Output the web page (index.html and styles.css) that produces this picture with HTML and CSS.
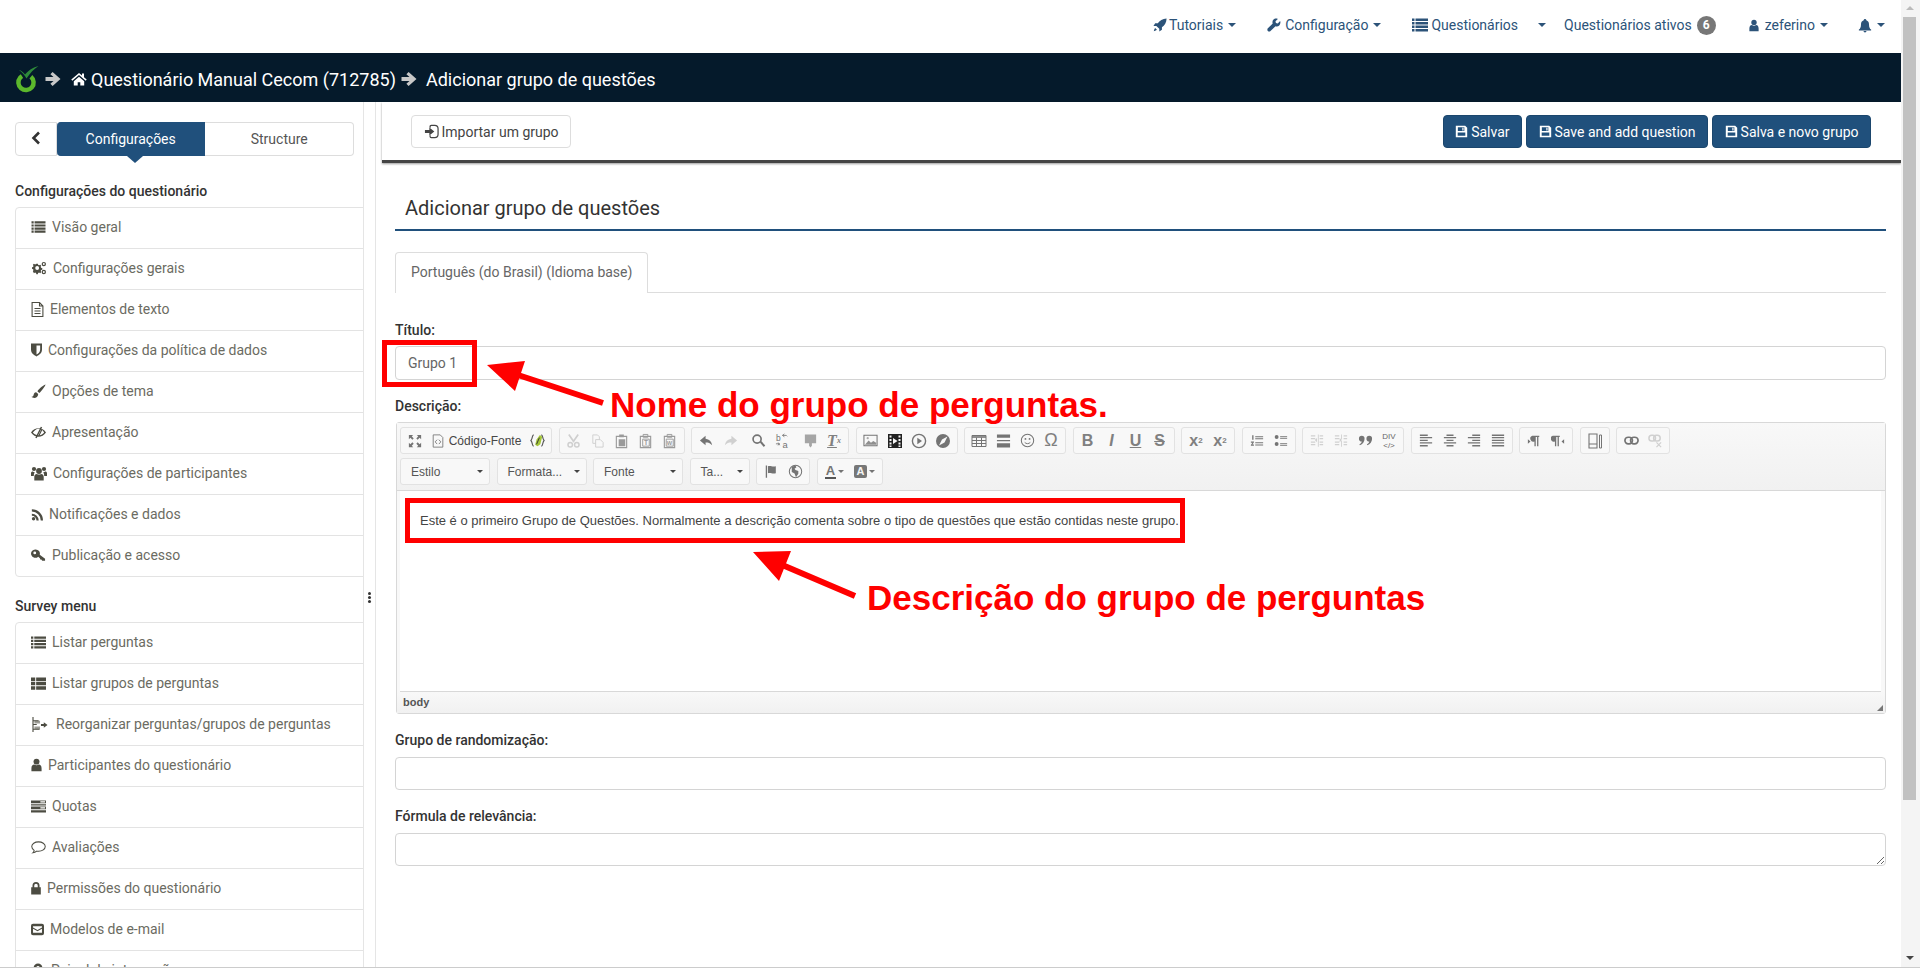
FILE: index.html
```html
<!DOCTYPE html>
<html lang="pt-BR">
<head>
	<title>Adicionar grupo de questões</title>
	<meta charset="utf-8">
	<link rel="stylesheet" href="styles.css">
</head>
<body>
<svg class="sprite" xmlns="http://www.w3.org/2000/svg">
	<symbol id="i-rocket" viewBox="0 0 16 16"><path d="M15.500.5C11 .5 7.500 3 5.500 6H2.500L.5 9h3.300l3.400 3.400V15.500l3-2v-3c3-2 5.300-5.500 5.300-10zM2.500 11.500c-1 1-1.500 3-1.500 3.500.5 0 2.500-.5 3.500-1.500z"/></symbol>
	<symbol id="i-wrench" viewBox="0 0 16 16"><path d="M15 3.500L12.300 6.200 10.200 5.700 9.700 3.600 12.400 1C10.500.2 8.400.7 7.200 2c-1 1.200-1.200 2.800-.7 4.200L1 11.800c-.8.800-.8 2.200 0 3s2.200.8 3 0L9.700 9.400c1.500.5 3.200.2 4.300-.9 1.300-1.300 1.700-3.300 1-5z"/></symbol>
	<symbol id="i-list" viewBox="0 0 16 16"><path d="M0 1.500h2.500v2.500H0zM3.500 1.500H16v2.500H3.500zM0 5h2.500v2.500H0zM3.500 5H16v2.500H3.500zM0 8.500h2.500V11H0zM3.500 8.500H16V11H3.500zM0 12h2.500v2.500H0zM3.500 12H16v2.500H3.500z"/></symbol>
	<symbol id="i-thlist" viewBox="0 0 16 16"><path d="M0 1.500h4.500v3.700H0zM5.500 1.500H16v3.700H5.500zM0 6.200h4.500v3.700H0zM5.500 6.200H16v3.700H5.500zM0 10.900h4.500v3.700H0zM5.500 10.900H16v3.700H5.500z"/></symbol>
	<symbol id="i-user" viewBox="1.500 0 13 16"><circle cx="8" cy="4" r="3.500"/><path d="M2 15.500v-3.700C2 9 3.500 7.500 5.300 7.500c1.600 1.200 3.800 1.200 5.400 0C12.500 7.500 14 9 14 11.800v3.700z"/></symbol>
	<symbol id="i-bell" viewBox="0 0 16 16"><path d="M8 .5A1.500 1.500 0 0 0 6.500 2C4.400 2.700 3.400 4.500 3.400 7c0 3-1 4.500-2.400 5.700v1h14v-1C13.600 11.500 12.600 10 12.600 7c0-2.500-1-4.300-3.100-5A1.500 1.500 0 0 0 8 .5zM6.300 14.400a1.700 1.700 0 0 0 3.400 0z"/></symbol>
	<symbol id="i-arrow" viewBox="0 0 16 16"><path d="M.5 6h8L5.400 3.200 7.600 1 15.500 8l-7.900 7-2.200-2.200L8.500 10h-8z"/></symbol>
	<symbol id="i-home" viewBox="0 0 16 16"><path d="M8 2L.3 8.600l1 1.100L8 4l6.700 5.700 1-1.100L13 6.300V2.500h-2v2.100zM2.800 10.200v4.300h3.900v-3.300h2.600v3.300h3.900v-4.300L8 5.700z"/></symbol>
	<symbol id="i-signin" viewBox="0 0 16 16"><path d="M6.500 4V2.800c0-.7.500-1.300 1.300-1.300h3.700c2 0 3.500 1.500 3.500 3.500v6c0 2-1.500 3.500-3.500 3.500H7.800c-.8 0-1.300-.6-1.300-1.300V12" fill="none" stroke="currentColor" stroke-width="1.300"/><path d="M1 6.500h4.700V3.800L11 8l-5.300 4.200V9.500H1z"/></symbol>
	<symbol id="i-save" viewBox="0 0 16 16"><path fill-rule="evenodd" d="M1 1h11.500L15 3.500V15H1zM3.500 2.700v4.600h8V2.700zM9 3.300h1.500v3.400H9zM3.300 9.200v4.100h9.400V9.200z"/></symbol>
	<symbol id="i-cogs" viewBox="0 0 16 16"><path fill-rule="evenodd" d="M6.700 3l.3 1.400 1.100.5 1.300-.7 1.200 1.200-.7 1.300.5 1.100 1.400.4v1.700l-1.400.4-.5 1.100.7 1.300-1.200 1.200-1.300-.7-1.100.5-.4 1.300H5l-.4-1.300-1.100-.5-1.300.7L1 11.700l.7-1.300-.5-1.100L0 8.900V7.200l1.200-.4.5-1.100-.7-1.300 1.200-1.200 1.300.7 1.100-.5L4.900 3zM5.900 5.800a2.200 2.200 0 1 0 0 4.400 2.200 2.200 0 0 0 0-4.400z"/><circle cx="13.500" cy="3.500" r="1.800" fill="none" stroke="currentColor" stroke-width="1.400"/><circle cx="13.500" cy="12.500" r="1.800" fill="none" stroke="currentColor" stroke-width="1.400"/></symbol>
	<symbol id="i-file" viewBox="2 .5 12 15"><path d="M2.600 1h7.400l3.400 3.500V15H2.600zM10 1v3.500h3.400M5 7h6M5 9.500h6M5 12h6" fill="none" stroke="currentColor" stroke-width="1.100"/></symbol>
	<symbol id="i-shield" viewBox="2 1 12 15"><path fill-rule="evenodd" d="M2 1.500h12v6.500c0 4-3 6-6 7.500-3-1.500-6-3.500-6-7.500zM8 3.500v10c2-1 4-2.600 4-5.500V3.500z"/></symbol>
	<symbol id="i-brush" viewBox="0 0 16 16"><path d="M15.500.5c-1.500.3-6.500 4-8.700 7.200l2 2C11.500 7.500 15.200 2 15.500.5zM5.500 8.800C3.500 9 3 10.500 2.700 12c-.2 1-1 1.500-2.200 1.700 1.500 1.800 7 2 7.200-3z"/></symbol>
	<symbol id="i-eye" viewBox="0 0 16 16"><path fill-rule="evenodd" d="M0 8c2-3 5-4.500 8-4.500S14 5 16 8c-2 3-5 4.500-8 4.500S2 11 0 8zM2 8c1.500 1.900 3.700 3 6 3l3-6.500C10 4.200 9 4 8 4 5.700 4 3.500 6.100 2 8zM12 5.300L9.300 11c1.900-.3 3.500-1.400 4.700-3-.5-1-1.200-2-2-2.700z"/><path d="M10.500 1.800l1.400.7L6 14.200l-1.400-.7z"/></symbol>
	<symbol id="i-users" viewBox="0 0 16 15"><circle cx="8" cy="5" r="2.900"/><circle cx="3" cy="3" r="2.100"/><circle cx="13" cy="3" r="2.100"/><path d="M3.300 14.500v-3.600c0-2 1-3 2.600-3 1.300.8 2.900.8 4.200 0 1.600 0 2.600 1 2.600 3v3.600zM0 10V7.300C0 6 .7 5.500 1.800 5.500c.6.500 1.300.7 2 .6-.4.800-1 2-1 3.900zM16 10V7.300c0-1.300-.7-1.800-1.800-1.800-.6.500-1.300.7-2 .6.400.8 1 2 1 3.900z"/></symbol>
	<symbol id="i-rss" viewBox="0 1 14 14"><circle cx="3" cy="13" r="2"/><path d="M1 7v2.600A5.400 5.400 0 0 1 6.400 15H9a8 8 0 0 0-8-8zM1 2v2.600A10.400 10.400 0 0 1 11.400 15H14A13 13 0 0 0 1 2z"/></symbol>
	<symbol id="i-key" viewBox="0 0 16 16"><path fill-rule="evenodd" d="M5 1.500a4.500 4.500 0 0 1 4.300 5.800l5.700 4.200v2h-3l-1-1.300-1.200.1-.3-1.300-1.800-1.800A4.500 4.500 0 1 1 5 1.500zM4 3.700a1.500 1.500 0 1 0 0 3 1.500 1.500 0 0 0 0-3z"/></symbol>
	<symbol id="i-tree" viewBox="0 0 19 16"><path d="M1.500 0v16M1.500 4h6M1.500 8h4M1.500 13h7" fill="none" stroke="currentColor" stroke-width="1.200"/><path d="M3 4h6v3H3zM3 10h6v3H3z" opacity=".55"/><path d="M10 7.500h3V5.500l4 3-4 3v-2h-3z"/></symbol>
	<symbol id="i-quota" viewBox="0 0 16 16"><path d="M0 1.500h16v3H0zM0 5.500h16v1.500H0zM0 8h16v3H0zM0 12h16v2.500H0z"/><path d="M10 2.400h5v1.200h-5zM10 8.900h5v1.200h-5z" fill="#fff"/></symbol>
	<symbol id="i-comment" viewBox="0 0 16 16"><path d="M8 2C4 2 .8 4.200.8 7c0 1.600 1 3 2.600 4-.1 1-.6 2-1.400 2.700 1.600-.2 3-.9 4-1.800.7.100 1.300.1 2 .1 4 0 7.200-2.200 7.200-5S12 2 8 2z" fill="none" stroke="currentColor" stroke-width="1.100"/></symbol>
	<symbol id="i-lock" viewBox="2.500 0 11 16"><path fill-rule="evenodd" d="M4 7V5a4 4 0 0 1 8 0v2h1.500v8.500h-11V7zM6 7h4V5a2 2 0 0 0-4 0z"/></symbol>
	<symbol id="i-mail" viewBox="0 0 16 16"><path fill-rule="evenodd" d="M2.500 1h11A2.500 2.500 0 0 1 16 3.500v9a2.500 2.500 0 0 1-2.500 2.500h-11A2.500 2.500 0 0 1 0 12.500v-9A2.500 2.500 0 0 1 2.500 1zM2.500 4v1.500L8 8.500l5.500-3V4zM2.500 7v5h11V7L8 10z"/></symbol>
	<symbol id="i-pin" viewBox="0 0 16 16"><path fill-rule="evenodd" d="M8 .5a5 5 0 0 1 5 5c0 2.500-3 6-5 9.500C6 11.500 3 8 3 5.500a5 5 0 0 1 5-5zM8 3.500a2 2 0 1 0 0 4 2 2 0 0 0 0-4z"/></symbol>

	<symbol id="c-max" viewBox="0 0 16 16"><path d="M1 1h5L4.300 2.700 6.500 5 5 6.500 2.700 4.300 1 6zM15 1v5l-1.700-1.700L11 6.500 9.500 5l2.200-2.300L10 1zM1 15v-5l1.700 1.700L5 9.500 6.500 11l-2.200 2.300L6 15zM15 15h-5l1.700-1.700L9.500 11 11 9.500l2.300 2.200L15 10z"/></symbol>
	<symbol id="c-src" viewBox="0 0 16 16"><path d="M2.500 1h8l3 3v11h-11z" fill="none" stroke="currentColor"/><path d="M7 6.500L4.800 9 7 11.500M9 6.500L11.200 9 9 11.500" fill="none" stroke="currentColor"/></symbol>
	<symbol id="c-ajax" viewBox="0 0 16 16"><path d="M4 2C2 2 3 6 1 8c2 2 1 6 3 6M12 2c2 0 1 4 3 6-2 2-1 6-3 6" fill="none" stroke="#555" stroke-width="1.200"/><path d="M10.500 2L13 4l-2 8-3 2-2.500-1.500L7 7z" fill="#a4c639"/><path d="M7 12l3-7" stroke="#333" fill="none"/></symbol>
	<symbol id="c-cut" viewBox="0 0 16 16"><path d="M3 1l5.500 8M13 1L7.500 9" fill="none" stroke="currentColor" stroke-width="1.800"/><circle cx="4.500" cy="12" r="2.400" fill="none" stroke="currentColor" stroke-width="1.600"/><circle cx="11.500" cy="12" r="2.400" fill="none" stroke="currentColor" stroke-width="1.600"/></symbol>
	<symbol id="c-copy" viewBox="0 0 16 16"><path d="M3 1.500h5l2 2v3M3 1.500v9h3M6 6.500h5l3 3v5H6z" fill="none" stroke="currentColor"/></symbol>
	<symbol id="c-paste" viewBox="0 0 16 16"><path d="M2.500 3h11v12h-11z" fill="none" stroke="currentColor" stroke-width="1.200"/><path d="M5.500 1h5v3h-5zM5 6h7v7.500H5z"/></symbol>
	<symbol id="c-paste-t" viewBox="0 0 16 16"><path d="M2.500 3h11v12h-11z" fill="none" stroke="currentColor" stroke-width="1.200"/><path d="M5.500 1h5v3h-5zM5 6h7v7.500H5z" fill="none" stroke="currentColor"/><text x="6.300" y="12.500" font-size="7" font-weight="700" font-family="Liberation Sans">T</text></symbol>
	<symbol id="c-paste-w" viewBox="0 0 16 16"><path d="M2.500 3h11v12h-11z" fill="none" stroke="currentColor" stroke-width="1.200"/><path d="M5.500 1h5v3h-5zM4.500 6h7.500v7.500H4.500z" fill="none" stroke="currentColor"/><text x="5" y="12" font-size="6" font-weight="700" font-family="Liberation Sans">W</text></symbol>
	<symbol id="c-undo" viewBox="0 0 16 16"><path d="M7 3L1 8l6 5v-3c3 0 5 .5 7 3-.5-4-3-6.500-7-7z"/></symbol>
	<symbol id="c-redo" viewBox="0 0 16 16"><path d="M9 3l6 5-6 5v-3c-3 0-5 .5-7 3 .5-4 3-6.500 7-7z"/></symbol>
	<symbol id="c-find" viewBox="0 0 16 16"><circle cx="6.500" cy="6.500" r="4.300" fill="none" stroke="currentColor" stroke-width="1.800"/><path d="M9.500 10l1.400-1.400 4.300 4.700-1.600 1.500z"/></symbol>
	<symbol id="c-replace" viewBox="0 0 16 16"><text x="1" y="8" font-size="9" font-family="Liberation Sans">b</text><text x="8" y="15.500" font-size="10" font-family="Liberation Sans">a</text><path d="M8 2h4l1 1M10 .5L8 2l2 1.500M1 11h3l1 1.500M3 10l2 1-2 1.500" fill="none" stroke="currentColor" stroke-width=".9"/></symbol>
	<symbol id="c-marker" viewBox="0 0 16 16"><path d="M2 1h12v9.500H9.500V13L8 15l-1.500-2v-2.500H2z" opacity=".75"/></symbol>
	<symbol id="c-image" viewBox="0 0 16 16"><path d="M1 2.500h14v11H1z" fill="none" stroke="currentColor" stroke-width="1.100"/><path d="M2 12.500l4-4.500 2.500 2.500 2.500-2 3 2v2z" opacity=".8"/><circle cx="5" cy="5.500" r="1.200" opacity=".6"/></symbol>
	<symbol id="c-film" viewBox="0 0 16 16"><path fill-rule="evenodd" d="M1 1h14v14H1zM2.500 2.500v2h2v-2zM2.500 6v2h2V6zM2.500 9.500v2h2v-2zM2.500 12.500v1.500h2v-1.500zM11.500 2.500v2h2v-2zM11.500 6v2h2V6zM11.500 9.500v2h2v-2zM11.500 12.500v1.500h2v-1.500zM6 5v6l4.500-3z"/></symbol>
	<symbol id="c-play" viewBox="0 0 16 16"><circle cx="8" cy="8" r="6.600" fill="none" stroke="currentColor" stroke-width="1.400"/><path d="M6.300 4.800v6.400L11 8z"/></symbol>
	<symbol id="c-compass" viewBox="0 0 16 16"><path fill-rule="evenodd" d="M8 1a7 7 0 1 1 0 14A7 7 0 0 1 8 1zM12.500 3.500L7 6.500 4 12.500 9.500 9.500z"/></symbol>
	<symbol id="c-table" viewBox="0 0 16 16"><path d="M1 2h14v3H1z" opacity=".8"/><path d="M1 2.500h14v11H1zM1 7.500h14M1 10.500h14M5.500 4.500v9M10.500 4.500v9" fill="none" stroke="currentColor"/></symbol>
	<symbol id="c-hr" viewBox="0 0 16 16"><path d="M1 1h14v3.500H1zM1 7h14v1.200H1zM1 10.500h14v4.500H1z"/></symbol>
	<symbol id="c-smile" viewBox="0 0 16 16"><circle cx="8" cy="8" r="6.600" fill="none" stroke="currentColor" stroke-width="1.100"/><circle cx="5.800" cy="6.300" r="1"/><circle cx="10.200" cy="6.300" r="1"/><path d="M5 10c1.500 1.800 4.500 1.800 6 0" fill="none" stroke="currentColor"/></symbol>
	<symbol id="c-ol" viewBox="0 0 16 16"><path d="M6 3h9v1.200H6zM6 5.500h9v1.200H6zM6 10h9v1.200H6zM6 12.500h9v1.200H6zM2.500 2H4v5H2.500zM1 9h3.500v1L2.800 12.500h1.700V14H1v-1l1.800-2.500H1z"/></symbol>
	<symbol id="c-ul" viewBox="0 0 16 16"><circle cx="3" cy="4" r="2.200"/><circle cx="3" cy="12" r="2.200"/><path d="M7 3h8v1.200H7zM7 5h8v1H7zM7 11h8v1.200H7zM7 13h8v1H7z"/></symbol>
	<symbol id="c-outdent" viewBox="0 0 16 16"><path d="M1 2h5v1.500H1zM1 5h5v1.500H1zM1 9h5v1.500H1zM1 12h5v1.500H1zM9 1h1v14H9zM11 2h4v1.500h-4zM11 5h4v1.500h-4zM11 9h4v1.500h-4zM11 12h4v1.500h-4zM8 5v5L5.500 7.500z"/></symbol>
	<symbol id="c-indent" viewBox="0 0 16 16"><path d="M1 2h5v1.500H1zM1 5h5v1.500H1zM1 9h5v1.500H1zM1 12h5v1.500H1zM8 1h1v14H8zM11 2h4v1.500h-4zM11 5h4v1.500h-4zM11 9h4v1.500h-4zM11 12h4v1.500h-4zM6.500 5v5L9 7.500z"/></symbol>
	<symbol id="c-quote" viewBox="0 0 16 16"><path d="M4 3a3 3 0 0 1 3 3c0 3-2 6-5 7l-.5-1c1.500-.7 2.500-2 2.500-3a3 3 0 0 1 0-6zM12 3a3 3 0 0 1 3 3c0 3-2 6-5 7l-.5-1c1.500-.7 2.500-2 2.500-3a3 3 0 0 1 0-6z"/></symbol>
	<symbol id="c-left" viewBox="0 0 16 16"><path d="M1 1h9v1.800H1zM1 4h14v1.500H1zM1 7h9v1.500H1zM1 10h14v1.500H1zM1 13h9v1.800H1z"/></symbol>
	<symbol id="c-center" viewBox="0 0 16 16"><path d="M4 1h8v1.800H4zM1 4h14v1.500H1zM4 7h8v1.500H4zM1 10h14v1.500H1zM4 13h8v1.800H4z"/></symbol>
	<symbol id="c-right" viewBox="0 0 16 16"><path d="M6 1h9v1.800H6zM1 4h14v1.500H1zM6 7h9v1.500H6zM1 10h14v1.500H1zM6 13h9v1.800H6z"/></symbol>
	<symbol id="c-justify" viewBox="0 0 16 16"><path d="M1 1h14v1.800H1zM1 4h14v1.500H1zM1 7h14v1.500H1zM1 10h14v1.500H1zM1 13h14v1.800H1z"/></symbol>
	<symbol id="c-ltr" viewBox="0 0 16 16"><path d="M6 2h8v1.500h-1V14h-1.500V3.500H10V14H8.500V8.500A3.300 3.300 0 0 1 6 2zM1 6v5l3-2.500z"/></symbol>
	<symbol id="c-rtl" viewBox="0 0 16 16"><path d="M2 2h8v1.500H9V14H7.500V3.500H6V14H4.500V8.500A3.300 3.300 0 0 1 2 2zM15 6v5l-3-2.500z"/></symbol>
	<symbol id="c-blocks" viewBox="0 0 16 16"><path d="M2 1h8v14H2zM2 11h8" fill="none" stroke="currentColor" stroke-width="1.100"/><path d="M12.500 2h2v13h-2z" fill="none" stroke="currentColor"/></symbol>
	<symbol id="c-link" viewBox="0 0 16 16"><rect x="1" y="4.500" width="8" height="7" rx="3.500" fill="none" stroke="currentColor" stroke-width="1.800"/><rect x="7" y="4.500" width="8" height="7" rx="3.500" fill="none" stroke="currentColor" stroke-width="1.800"/></symbol>
	<symbol id="c-unlink" viewBox="0 0 16 16"><rect x="1" y="2.500" width="7" height="6" rx="3" fill="none" stroke="currentColor" stroke-width="1.600"/><rect x="6" y="2.500" width="7" height="6" rx="3" fill="none" stroke="currentColor" stroke-width="1.600"/><path d="M9 10l5 5M14 10l-5 5" stroke="currentColor" fill="none" stroke-width="1.300"/></symbol>
	<symbol id="c-flag" viewBox="0 0 16 16"><path d="M2 1h1.500v14H2zM4.500 2c3-1 5 1 9 0v8c-4 1-6-1-9 0z"/></symbol>
	<symbol id="c-globe" viewBox="0 0 16 16"><circle cx="8" cy="8" r="6.600" fill="none" stroke="currentColor" stroke-width="1.100"/><path d="M4 3l4-1.500 1 2-2 1.500 1 1.500 3 1v3L8.500 14 7 10 4 8.500z"/></symbol>
</svg>

<div class="page">
	<div class="window">
		<nav class="topnav">
			<a class="nav-item"><svg class="nav-icon" width="14" height="14"><use href="#i-rocket"/></svg>Tutoriais<i class="caret"></i></a>
			<a class="nav-item nav-config"><svg class="nav-icon" width="14" height="14"><use href="#i-wrench"/></svg>Configuração<i class="caret"></i></a>
			<a class="nav-item nav-surveys"><svg class="nav-icon" width="16" height="16"><use href="#i-list"/></svg>Questionários<i class="caret"></i></a>
			<a class="nav-item nav-active">Questionários ativos<span class="badge">6</span></a>
			<a class="nav-item nav-user"><svg class="nav-icon" width="10" height="13"><use href="#i-user"/></svg>zeferino<i class="caret"></i></a>
			<a class="nav-item nav-bell"><svg class="nav-icon" width="14" height="15"><use href="#i-bell"/></svg><i class="caret"></i></a>
		</nav>

		<header class="breadcrumb">
			<svg class="logo" width="24" height="28" viewBox="0 0 24 28">
				<circle cx="11" cy="17.500" r="7.600" fill="none" stroke="#5cb82c" stroke-width="4.500" stroke-dasharray="38 9.800" transform="rotate(-50 11 17.500)"/>
				<path d="M4 5c2 .5 4 2 6 4.500C13 6 17 2.500 23.500 1c-4.500 3-8.500 7-12 12.500C9.500 10 7 7 4 5z" fill="#2e8b3a"/>
			</svg>
			<svg class="crumb-arrow" width="16" height="16"><use href="#i-arrow"/></svg>
			<svg class="crumb-home" width="16" height="16"><use href="#i-home"/></svg>
			<span class="crumb-survey">Questionário Manual Cecom (712785)</span>
			<svg class="crumb-arrow" width="16" height="16"><use href="#i-arrow"/></svg>
			<span class="crumb-page">Adicionar grupo de questões</span>
		</header>

		<div class="workspace">
			<aside class="sidebar">
				<div class="side-tabs">
					<button class="side-back"><svg width="12" height="14" viewBox="0 0 12 14"><path d="M9 1.500L3.500 7 9 12.500" fill="none" stroke="#333" stroke-width="2.600"/></svg></button>
					<button class="side-tab active">Configurações</button>
					<button class="side-tab">Structure</button>
				</div>

				<h4 class="side-title">Configurações do questionário</h4>
				<ul class="side-list">
					<li><svg width="15" height="14"><use href="#i-list"/></svg>Visão geral</li>
					<li><svg width="16" height="14"><use href="#i-cogs"/></svg>Configurações gerais</li>
					<li><svg width="13" height="15"><use href="#i-file"/></svg>Elementos de texto</li>
					<li><svg width="11" height="14"><use href="#i-shield"/></svg>Configurações da política de dados</li>
					<li><svg width="15" height="15"><use href="#i-brush"/></svg>Opções de tema</li>
					<li><svg width="15" height="15"><use href="#i-eye"/></svg>Apresentação</li>
					<li><svg width="16" height="15"><use href="#i-users"/></svg>Configurações de participantes</li>
					<li><svg width="12" height="13"><use href="#i-rss"/></svg>Notificações e dados</li>
					<li><svg width="15" height="15"><use href="#i-key"/></svg>Publicação e acesso</li>
				</ul>

				<h4 class="side-title">Survey menu</h4>
				<ul class="side-list">
					<li><svg width="15" height="15"><use href="#i-list"/></svg>Listar perguntas</li>
					<li><svg width="15" height="15"><use href="#i-thlist"/></svg>Listar grupos de perguntas</li>
					<li><svg width="19" height="15"><use href="#i-tree"/></svg>Reorganizar perguntas/grupos de perguntas</li>
					<li><svg width="11" height="14"><use href="#i-user"/></svg>Participantes do questionário</li>
					<li><svg width="15" height="15"><use href="#i-quota"/></svg>Quotas</li>
					<li><svg width="15" height="15"><use href="#i-comment"/></svg>Avaliações</li>
					<li><svg width="10" height="14"><use href="#i-lock"/></svg>Permissões do questionário</li>
					<li><svg width="13" height="13"><use href="#i-mail"/></svg>Modelos de e-mail</li>
					<li><svg width="14" height="14"><use href="#i-pin"/></svg>Painel de integração</li>
				</ul>
			</aside>

			<div class="gutter"><span class="gutter-dots"></span></div>

			<main class="main">
				<div class="toolbar">
					<button class="btn"><svg width="15" height="15"><use href="#i-signin"/></svg>Importar um grupo</button>
					<div class="toolbar-right">
						<button class="btn btn-primary"><svg width="13" height="13"><use href="#i-save"/></svg>Salvar</button>
						<button class="btn btn-primary"><svg width="13" height="13"><use href="#i-save"/></svg>Save and add question</button>
						<button class="btn btn-primary"><svg width="13" height="13"><use href="#i-save"/></svg>Salva e novo grupo</button>
					</div>
				</div>

				<section class="content">
					<h3 class="page-title">Adicionar grupo de questões</h3>

					<div class="lang-tabs">
						<span class="lang-tab">Português (do Brasil) (Idioma base)</span>
					</div>

					<label class="field-label label-title">Título:</label>
					<input class="field field-title" type="text" value="Grupo 1">

					<label class="field-label label-desc">Descrição:</label>
					<div class="editor">
						<div class="ck-top">
							<div class="ck-row">
								<div class="ck-group">
									<span class="ck-btn"><svg width="14" height="14"><use href="#c-max"/></svg></span>
									<span class="ck-btn ck-source"><svg width="14" height="14"><use href="#c-src"/></svg>Código-Fonte</span>
									<span class="ck-btn"><svg width="15" height="15"><use href="#c-ajax"/></svg></span>
								</div>
								<div class="ck-group off">
									<span class="ck-btn"><svg width="15" height="16"><use href="#c-cut"/></svg></span>
									<span class="ck-btn"><svg width="15" height="16"><use href="#c-copy"/></svg></span>
									<span class="ck-btn ck-paste"><svg width="15" height="16"><use href="#c-paste"/></svg></span>
									<span class="ck-btn ck-paste"><svg width="15" height="16"><use href="#c-paste-t"/></svg></span>
									<span class="ck-btn ck-paste"><svg width="15" height="16"><use href="#c-paste-w"/></svg></span>
								</div>
								<div class="ck-group">
									<span class="ck-btn"><svg width="15" height="15"><use href="#c-undo"/></svg></span>
									<span class="ck-btn off"><svg width="15" height="15"><use href="#c-redo"/></svg></span>
									<span class="ck-btn ck-sep"><svg width="15" height="15"><use href="#c-find"/></svg></span>
									<span class="ck-btn"><svg width="15" height="16"><use href="#c-replace"/></svg></span>
									<span class="ck-btn ck-sep ck-light"><svg width="15" height="16"><use href="#c-marker"/></svg></span>
									<span class="ck-btn ck-text ck-clear"><u>T</u><sub>x</sub></span>
								</div>
								<div class="ck-group">
									<span class="ck-btn"><svg width="15" height="15"><use href="#c-image"/></svg></span>
									<span class="ck-btn dark"><svg width="16" height="16"><use href="#c-film"/></svg></span>
									<span class="ck-btn"><svg width="16" height="16"><use href="#c-play"/></svg></span>
									<span class="ck-btn"><svg width="16" height="16"><use href="#c-compass"/></svg></span>
								</div>
								<div class="ck-group">
									<span class="ck-btn"><svg width="16" height="16"><use href="#c-table"/></svg></span>
									<span class="ck-btn"><svg width="15" height="16"><use href="#c-hr"/></svg></span>
									<span class="ck-btn"><svg width="15" height="15"><use href="#c-smile"/></svg></span>
									<span class="ck-btn ck-text ck-omega">Ω</span>
								</div>
								<div class="ck-group">
									<span class="ck-btn ck-text ck-b">B</span>
									<span class="ck-btn ck-text ck-i">I</span>
									<span class="ck-btn ck-text ck-u">U</span>
									<span class="ck-btn ck-text ck-s">S</span>
								</div>
								<div class="ck-group">
									<span class="ck-btn ck-text ck-b">x<sub>2</sub></span>
									<span class="ck-btn ck-text ck-b">x<sup>2</sup></span>
								</div>
								<div class="ck-group">
									<span class="ck-btn"><svg width="14" height="15"><use href="#c-ol"/></svg></span>
									<span class="ck-btn"><svg width="14" height="15"><use href="#c-ul"/></svg></span>
								</div>
								<div class="ck-group">
									<span class="ck-btn off"><svg width="14" height="15"><use href="#c-outdent"/></svg></span>
									<span class="ck-btn off"><svg width="14" height="15"><use href="#c-indent"/></svg></span>
									<span class="ck-btn"><svg width="15" height="15"><use href="#c-quote"/></svg></span>
									<span class="ck-btn ck-div">DIV<br>&lt;/&gt;</span>
								</div>
								<div class="ck-group">
									<span class="ck-btn"><svg width="14" height="15"><use href="#c-left"/></svg></span>
									<span class="ck-btn"><svg width="14" height="15"><use href="#c-center"/></svg></span>
									<span class="ck-btn"><svg width="14" height="15"><use href="#c-right"/></svg></span>
									<span class="ck-btn"><svg width="14" height="15"><use href="#c-justify"/></svg></span>
								</div>
								<div class="ck-group">
									<span class="ck-btn"><svg width="14" height="14"><use href="#c-ltr"/></svg></span>
									<span class="ck-btn"><svg width="14" height="14"><use href="#c-rtl"/></svg></span>
								</div>
								<div class="ck-group">
									<span class="ck-btn"><svg width="16" height="18"><use href="#c-blocks"/></svg></span>
								</div>
								<div class="ck-group">
									<span class="ck-btn"><svg width="15" height="15"><use href="#c-link"/></svg></span>
									<span class="ck-btn off"><svg width="15" height="15"><use href="#c-unlink"/></svg></span>
								</div>
							</div>
							<div class="ck-row">
								<span class="ck-combo">Estilo<i class="caret"></i></span>
								<span class="ck-combo">Formata...<i class="caret"></i></span>
								<span class="ck-combo">Fonte<i class="caret"></i></span>
								<span class="ck-combo ck-combo-small">Ta...<i class="caret"></i></span>
								<div class="ck-group">
									<span class="ck-btn"><svg width="14" height="15"><use href="#c-flag"/></svg></span>
									<span class="ck-btn"><svg width="15" height="15"><use href="#c-globe"/></svg></span>
								</div>
								<div class="ck-group">
									<span class="ck-btn ck-color"><span class="ck-a">A</span><i class="caret"></i></span>
									<span class="ck-btn ck-color"><span class="ck-a-bg">A</span><i class="caret"></i></span>
								</div>
							</div>
						</div>
						<div class="ck-body">Este é o primeiro Grupo de Questões. Normalmente a descrição comenta sobre o tipo de questões que estão contidas neste grupo.<span class="ck-cursor"></span></div>
						<div class="ck-bottom">body<i class="ck-resize"></i></div>
					</div>

					<label class="field-label label-random">Grupo de randomização:</label>
					<input class="field" type="text">

					<label class="field-label label-formula">Fórmula de relevância:</label>
					<textarea class="field field-area"></textarea>
				</section>
			</main>
		</div>
	</div>

	<div class="scrollbar">
		<i class="scroll-up"></i>
		<div class="scroll-thumb"></div>
		<i class="scroll-down"></i>
	</div>

	<!-- red notes drawn on top of the screen -->
	<div class="notes">
		<svg class="note-arrows" width="1920" height="968">
			<path d="M603 403L515 374M855 596L780 564" fill="none" stroke="#f00" stroke-width="6"/>
			<path d="M487 365L525 361L515 391zM753 552L791 551L779 581z" fill="#f00"/>
		</svg>
		<div class="note-box box-title"></div>
		<div class="note-box box-desc"></div>
		<div class="note-text text-title">Nome do grupo de perguntas.</div>
		<div class="note-text text-desc">Descrição do grupo de perguntas</div>
	</div>
</div>
</body>
</html>
```
FILE: styles.css
```css
html, body {
	margin: 0;
	padding: 0;
	height: 100%;
	overflow: hidden;
	background-color: #fff;
}

body {
	font-family: "Roboto", "Liberation Sans", sans-serif;
	font-size: 14px;
	color: #555;
}

.sprite {
	display: none;
}

.page {
	position: relative;
	display: flex;
	height: 967px;
	border-bottom: 1px solid #ccc;
	overflow: hidden;
}

.window {
	display: flex;
	flex-direction: column;
	width: 1901px;
	flex: none;
}

svg {
	fill: currentColor;
	flex: none;
}

.caret {
	display: inline-block;
	border-top: 4px solid currentColor;
	border-left: 4px solid transparent;
	border-right: 4px solid transparent;
	width: 0;
	height: 0;
}

/* top navigation */
.topnav {
	display: flex;
	align-items: center;
	justify-content: flex-end;
	height: 50px;
	padding: 0 16px 3px 0;
	color: #2c5379;
	flex: none;
}

.nav-item {
	display: flex;
	align-items: center;
	margin-left: 31px;
	white-space: nowrap;
}

.nav-icon {
	margin-right: 2px;
}

.nav-item .caret {
	margin-left: 5px;
}

.nav-config .nav-icon {
	margin-right: 4px;
}

.nav-surveys .nav-icon {
	margin-right: 3px;
}

.nav-surveys .caret {
	margin-left: 20px;
}

.nav-active {
	margin-left: 18px;
}

.nav-user {
	margin-left: 33px;
}

.nav-user .nav-icon {
	margin-right: 6px;
}

.nav-bell {
	margin-left: 30px;
}

.nav-bell .nav-icon {
	margin-right: 0;
}

.badge {
	display: inline-block;
	width: 19px;
	height: 19px;
	line-height: 19px;
	margin-left: 5px;
	border-radius: 50%;
	background-color: #777;
	color: #fff;
	font-size: 12px;
	font-weight: 700;
	text-align: center;
}

/* dark title bar */
.breadcrumb {
	display: flex;
	align-items: center;
	height: 46px;
	padding: 3px 0 0 15px;
	background-color: #051a2b;
	color: #fff;
	font-size: 18px;
	flex: none;
}

.breadcrumb svg {
	color: #c8c8c8;
}

.logo {
	margin-right: 6px;
}

.crumb-arrow {
	margin-right: 9px;
}

.breadcrumb .crumb-home {
	color: #fff;
	margin-right: 4px;
	margin-left: 1px;
}

.crumb-survey {
	margin-right: 5px;
}

.workspace {
	display: flex;
	flex: 1;
	min-height: 0;
}

/* sidebar */
.sidebar {
	width: 363px;
	padding: 20px 0 0 15px;
	box-sizing: border-box;
	overflow: hidden;
	flex: none;
}

.side-tabs {
	position: relative;
	display: flex;
	width: 339px;
	height: 34px;
	margin-bottom: 27px;
}

.side-tabs button {
	font-family: inherit;
	font-size: 14px;
	color: #555;
	background-color: #fff;
	border: 1px solid #ddd;
	padding: 0;
}

.side-back {
	width: 42px;
	border-radius: 4px 0 0 4px;
}

.side-tab {
	width: 149px;
	border-left: none !important;
}

.side-tab:last-child {
	border-radius: 0 4px 4px 0;
}

.side-tabs .side-tab.active {
	background-color: #20507c;
	border-color: #20507c;
	color: #fff;
	border-radius: 4px 0 0 4px;
}

.side-tab.active::after {
	content: "";
	position: absolute;
	left: 112px;
	top: 34px;
	border-top: 7px solid #20507c;
	border-left: 8px solid transparent;
	border-right: 8px solid transparent;
}

.side-title {
	margin: 0 0 7px;
	height: 17px;
	line-height: 17px;
	font-size: 14px;
	font-weight: 500;
	color: #333;
}

.side-list {
	list-style: none;
	margin: 0 0 21px;
	padding: 0;
	width: 370px;
	border: 1px solid #e3e3e3;
	border-radius: 4px 0 0 4px;
}

.side-list li {
	display: flex;
	align-items: center;
	height: 38px;
	padding: 0 0 2px 15px;
	border-bottom: 1px solid #e3e3e3;
	color: #6b6b62;
	white-space: nowrap;
}

.side-list li:last-child {
	border-bottom: none;
}

.side-list svg {
	margin-right: 6px;
	color: #4c4c42;
}

.gutter {
	position: relative;
	width: 11px;
	border-left: 1px solid #e5e5e5;
	border-right: 1px solid #e5e5e5;
	flex: none;
}

.gutter-dots {
	position: absolute;
	left: 4px;
	top: 490px;
	width: 3px;
	height: 3px;
	border-radius: 50%;
	background-color: #333;
	box-shadow: 0 4px 0 #333, 0 8px 0 #333;
}

/* main column */
.main {
	flex: 1;
	min-width: 0;
}

.toolbar {
	display: flex;
	justify-content: space-between;
	align-items: flex-start;
	height: 45px;
	margin-left: 6px;
	padding: 13px 30px 0 29px;
	border-bottom: 3px solid #444;
	box-shadow: 0 1px 2px rgba(0,0,0,0.4);
}

.toolbar-right {
	display: flex;
	gap: 4px;
}

.btn {
	display: flex;
	align-items: center;
	gap: 3px;
	height: 33px;
	padding: 0 11.500px;
	font-family: inherit;
	font-size: 14px;
	color: #444;
	background-color: #fff;
	border: 1px solid #ddd;
	border-radius: 4px;
	white-space: nowrap;
}

.btn-primary {
	background-color: #20507c;
	border-color: #1b466d;
	color: #fff;
}

.content {
	padding: 0 15px 0 19px;
}

.page-title {
	margin: 0 0 21px;
	padding: 33px 0 8px 10px;
	height: 25px;
	line-height: 25px;
	font-size: 20px;
	font-weight: 400;
	color: #333;
	border-bottom: 2px solid #20507c;
}

.lang-tabs {
	height: 40px;
	border-bottom: 1px solid #ddd;
}

.lang-tab {
	display: inline-block;
	height: 41px;
	line-height: 38px;
	padding: 0 15px;
	box-sizing: border-box;
	background-color: #fff;
	border: 1px solid #ddd;
	border-bottom: none;
	border-radius: 4px 4px 0 0;
	color: #666;
}

.field-label {
	display: block;
	height: 16px;
	line-height: 16px;
	font-size: 14px;
	font-weight: 500;
	color: #333;
}

.label-title {
	margin-top: 29px;
	margin-bottom: 8px;
}

.label-desc {
	margin-top: 18px;
	margin-bottom: 8px;
}

.label-random {
	margin-top: 18px;
	margin-bottom: 9px;
}

.label-formula {
	margin-top: 18px;
	margin-bottom: 9px;
}

.field {
	display: block;
	width: 100%;
	height: 33px;
	box-sizing: border-box;
	padding: 0 12px;
	font-family: inherit;
	font-size: 14px;
	color: #666;
	background-color: #fff;
	border: 1px solid #d4d4d4;
	border-radius: 4px;
	outline: none;
}

.field-title {
	height: 34px;
}

.field-area {
	resize: vertical;
	margin: 0;
}

/* text editor */
.editor {
	height: 290px;
	margin-left: 1px;
	display: flex;
	flex-direction: column;
	border: 1px solid #d8d8d8;
	border-radius: 3px;
	background-color: #f8f8f8;
	font-family: "Liberation Sans", Arial, sans-serif;
}

.ck-top {
	height: 68px;
	box-sizing: border-box;
	padding: 4px 3px 0 3px;
	background: linear-gradient(#f8f8f8, #f1f1f1);
	border-bottom: 1px solid #d8d8d8;
	flex: none;
}

.ck-row {
	display: flex;
	gap: 6.500px;
	height: 27px;
	margin-bottom: 4px;
}

.ck-group, .ck-combo {
	display: flex;
	align-items: center;
	height: 27px;
	box-sizing: border-box;
	padding: 0 2px;
	background-color: #f8f8f8;
	border: 1px solid #e2e2e2;
	border-radius: 3px;
	color: #747474;
}

.ck-group.off {
	color: #cfcfcf;
}

.ck-btn {
	display: flex;
	align-items: center;
	justify-content: center;
	width: 24px;
	height: 25px;
}

.ck-btn.off {
	color: #d0d0d0;
}

.ck-btn.dark {
	color: #222;
}

.ck-paste {
	color: #9a9a9a;
}

.ck-sep {
	margin-left: 4px;
}

.ck-light {
	color: #8a8a8a;
}

.ck-source {
	width: 98px;
	gap: 4px;
	font-size: 12px;
	color: #474747;
}

.ck-source svg {
	color: #777;
}

.ck-text {
	font-family: "Liberation Sans", Arial, sans-serif;
	font-size: 16px;
	color: #808080;
}

.ck-text sub, .ck-text sup {
	font-size: 8px;
}

.ck-b {
	font-weight: 700;
}

.ck-i {
	font-style: italic;
	font-weight: 700;
}

.ck-u {
	font-weight: 700;
	text-decoration: underline;
}

.ck-s {
	font-weight: 700;
	text-decoration: line-through;
}

.ck-omega {
	font-size: 18px;
}

.ck-clear {
	font-style: italic;
	font-family: "Liberation Serif", serif;
	font-weight: 700;
}

.ck-div {
	font-size: 8px;
	line-height: 9px;
	text-align: center;
	color: #666;
}

.ck-combo {
	justify-content: space-between;
	width: 90px;
	padding: 0 6px 0 10px;
	font-size: 12px;
	color: #555;
}

.ck-combo .caret {
	border-top-color: #444;
	border-width: 3px 3px 0;
}

.ck-combo-small {
	width: 60px;
}

.ck-color {
	width: 30px;
	gap: 2px;
}

.ck-color .caret {
	border-width: 3px 3px 0;
}

.ck-a {
	font-size: 13px;
	font-weight: 700;
	line-height: 13px;
	border-bottom: 2px solid #555;
	padding: 0 1px;
}

.ck-a-bg {
	width: 13px;
	height: 13px;
	line-height: 13px;
	text-align: center;
	font-size: 11px;
	font-weight: 700;
	background-color: #777;
	color: #f4f4f4;
	border-radius: 2px;
}

.ck-body {
	height: 201px;
	margin: 0 4px 0 3px;
	padding: 19px 0 0 20px;
	box-sizing: border-box;
	background-color: #fff;
	border-bottom: 1px solid #d8d8d8;
	font-size: 13px;
	line-height: 22px;
	color: #444;
	flex: none;
}

.ck-cursor {
	display: inline-block;
	width: 1px;
	height: 15px;
	margin-left: 1px;
	background-color: #222;
	vertical-align: -3px;
}

.ck-bottom {
	position: relative;
	flex: 1;
	padding-left: 6px;
	line-height: 20px;
	font-size: 11px;
	font-weight: 700;
	color: #555;
	background: linear-gradient(#f8f8f8, #f1f1f1);
}

.ck-resize {
	position: absolute;
	right: 2px;
	bottom: 2px;
	border-bottom: 6px solid #777;
	border-left: 6px solid transparent;
}

/* fake scrollbar of the screenshot */
.scrollbar {
	position: relative;
	width: 19px;
	background-color: #f4f4f4;
	flex: none;
}

.scroll-thumb {
	width: 13px;
	height: 783px;
	margin: 17px 0 0 2px;
	background-color: #c1c1c1;
}

.scroll-up, .scroll-down {
	position: absolute;
	left: 5px;
	border-left: 4px solid transparent;
	border-right: 4px solid transparent;
}

.scroll-up {
	top: 6px;
	border-bottom: 4px solid #bbb;
}

.scroll-down {
	bottom: 7px;
	border-top: 4px solid #444;
}

/* red notes */
.notes {
	position: absolute;
	top: 0;
	left: 0;
	width: 1920px;
	height: 968px;
	pointer-events: none;
}

.note-arrows {
	position: absolute;
	top: 0;
	left: 0;
}

.note-box {
	position: absolute;
	box-sizing: border-box;
	border: 5px solid #f00;
}

.box-title {
	left: 382px;
	top: 340px;
	width: 95px;
	height: 47px;
}

.box-desc {
	left: 405px;
	top: 498px;
	width: 780px;
	height: 45px;
}

.note-text {
	position: absolute;
	font-family: "Liberation Sans", Arial, sans-serif;
	font-weight: 700;
	font-size: 35px;
	line-height: 40px;
	color: #f00;
	white-space: nowrap;
}

.text-title {
	left: 610px;
	top: 385px;
}

.text-desc {
	left: 867px;
	top: 578px;
}
```
